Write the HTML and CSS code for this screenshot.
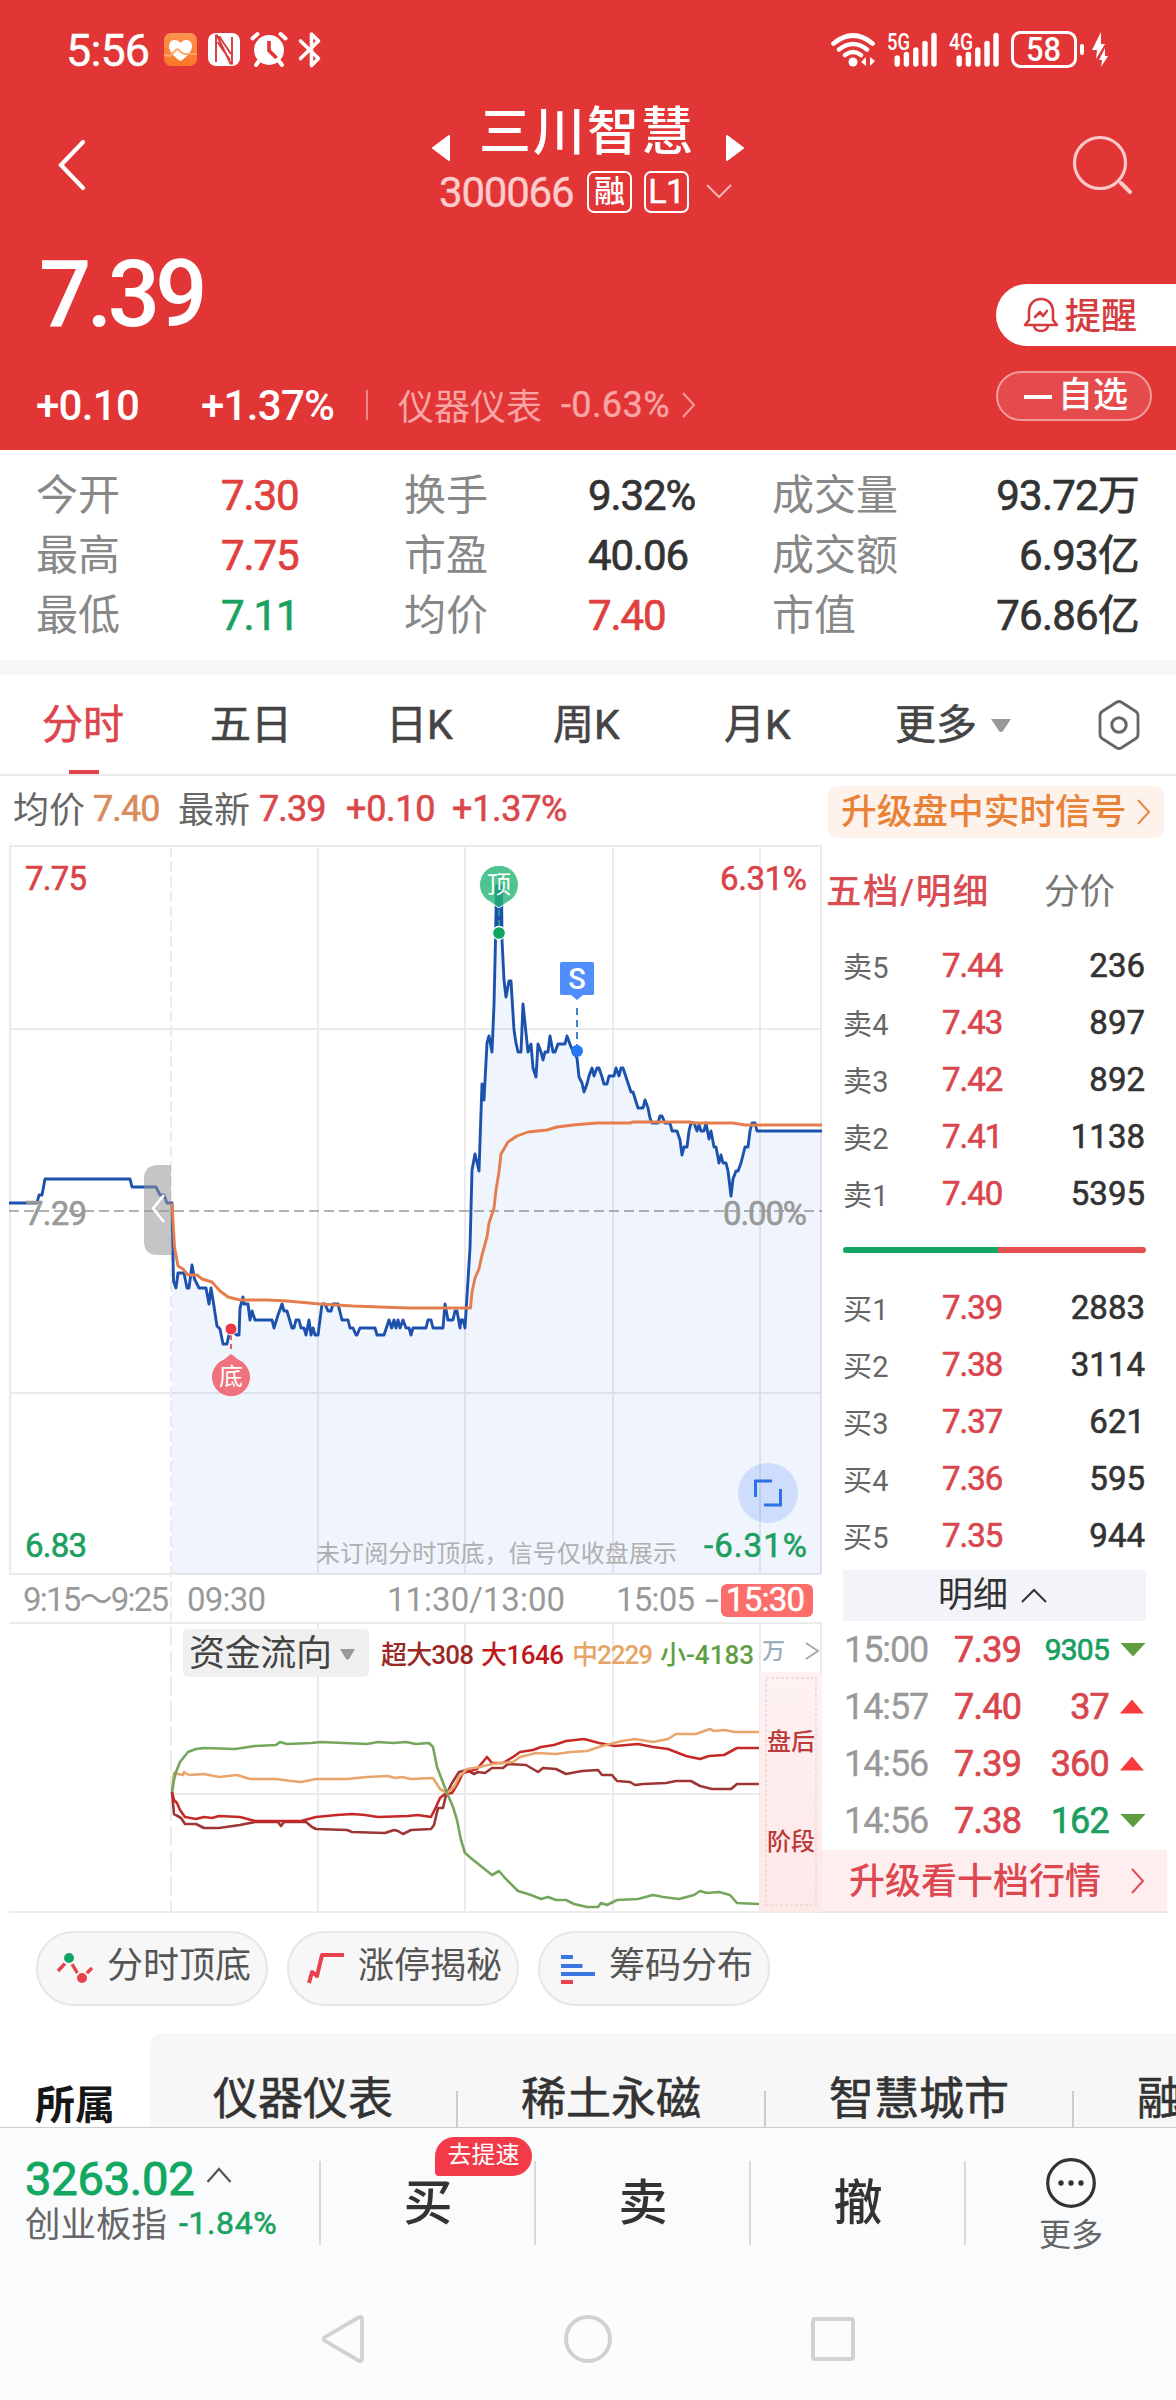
FILE: index.html
```html
<!DOCTYPE html>
<html lang="zh-CN">
<head>
<meta charset="utf-8">
<title>三川智慧 300066</title>
<link rel="stylesheet" href="styles.css">
</head>
<body>
<header class="top">
  <div class="status">
    <span class="clock">5:56</span>
    <svg class="st-left" width="160" height="38" viewBox="163 31 160 38">
      <defs><linearGradient id="hg" x1="0" y1="0" x2="0" y2="1"><stop offset="0" stop-color="#fc9350"/><stop offset="1" stop-color="#fb7526"/></linearGradient></defs>
      <rect x="164" y="33" width="33" height="33" rx="7" fill="url(#hg)"/>
      <path d="M180.500 61C174 57 169 51 169 46c0-7 8-8 11.500-3 3.500-5 11.500-4 11.500 3 0 5-5 11-11.500 15z" fill="#fff"/>
      <path d="M164 55l6 1 6-6c3-3 4 4 9 4h12" fill="none" stroke="#fba765" stroke-width="2"/>
      <rect x="208" y="33" width="32" height="33" rx="8" fill="#fff"/>
      <path d="M216 34.500V62M216.500 34.500L231 64.500M217.500 42L230 60M219 36l12 18M232 64.500V37" fill="none" stroke="#d8393a" stroke-width="1.900"/>
      <circle cx="269" cy="50" r="15" fill="#fff"/>
      <path d="M252.500 38.500l5-4.500M285.500 38.500l-5-4.500M259 61l-3 4M279 61l3 4" stroke="#fff" stroke-width="4" stroke-linecap="round"/>
      <path d="M269 41v9.500l7.500 7.500" fill="none" stroke="#e23536" stroke-width="3.600"/>
      <path d="M300.500 41L318.500 58.500 311.500 65.500V34L318.500 41 300.500 58.500" fill="none" stroke="#fff" stroke-width="3.600" stroke-linejoin="round" stroke-linecap="round"/>
    </svg>
    <svg class="st-right" width="280" height="40" viewBox="830 30 280 40">
      <g fill="none" stroke="#fff" stroke-width="4.600" stroke-linecap="round">
        <path d="M833.500 43.500Q853 27.500 872.500 43.500"/><path d="M839 49.500Q853 38.500 867 49.500"/><path d="M845 55Q853 49 861 55"/>
      </g>
      <circle cx="853" cy="62" r="4.500" fill="#fff"/>
      <path d="M866 57v9l-5-4zM870 57v9l5-5z" fill="#fff"/>
      <g fill="#fff" font-family="Roboto, sans-serif" font-weight="500" font-size="23">
        <text x="887" y="50" textLength="23" lengthAdjust="spacingAndGlyphs">5G</text>
        <text x="949" y="50" textLength="24" lengthAdjust="spacingAndGlyphs">4G</text>
      </g>
      <path d="M897.200 58v6M906.400 54.500v9.500M915.800 50v14M925 43.500v20.500M934 35.500v28.500M959.200 58v6M968.400 54.500v9.500M977.800 50v14M987 43.500v20.500M996 35.500v28.500" stroke="#fff" stroke-width="5.400" stroke-linecap="round"/>
      <rect x="1012.500" y="32.500" width="63" height="34" rx="8" fill="none" stroke="#fff" stroke-width="3"/>
      <rect x="1080" y="44" width="4" height="11" rx="2" fill="#fff"/>
      <text x="1026" y="61" font-family="Roboto, sans-serif" font-weight="500" font-size="34" fill="#fff" textLength="35" lengthAdjust="spacingAndGlyphs">58</text>
      <path d="M1101 32l-9 18h5l-1 9 9-15h-4zM1105 48l-6 12h3l-1 7 7-11h-3z" fill="#fff"/>
    </svg>
  </div>

  <div class="titlebar">
    <svg width="30" height="52" viewBox="0 0 30 52"><path d="M26 3L4 26 26 49" fill="none" stroke="#fff" stroke-width="4.200" stroke-linecap="round"/></svg>
    <div class="title">
      <div class="name-row">
        <svg width="20" height="28" viewBox="0 0 20 28"><path d="M18 2v24L2 14z" fill="#fff" stroke="#fff" stroke-width="2" stroke-linejoin="round"/></svg>
        <h1>三川智慧</h1>
        <svg width="20" height="28" viewBox="0 0 20 28"><path d="M2 2v24l16-12z" fill="#fff" stroke="#fff" stroke-width="2" stroke-linejoin="round"/></svg>
      </div>
      <div class="code-row">
        <span class="code">300066</span><span class="tag">融</span><span class="tag tag-l">L1</span>
        <svg width="26" height="16" viewBox="0 0 26 16"><path d="M1 1l12 12L25 1" fill="none" stroke="#f6b4b4" stroke-width="2"/></svg>
      </div>
    </div>
    <svg width="62" height="62" viewBox="0 0 62 62"><circle cx="29" cy="29" r="25.500" fill="none" stroke="#fbc9c9" stroke-width="3.200"/><path d="M50 49l9 9" stroke="#fbc9c9" stroke-width="4" stroke-linecap="round"/></svg>
  </div>

  <div class="quote">
    <div class="quote-main">
      <div class="price">7.39</div>
      <div class="change">
        <span class="chg">+0.10</span><span class="pct">+1.37%</span><i></i>
        <span class="sector">仪器仪表</span><span class="sector-pct">-0.63%</span>
        <svg width="14" height="26" viewBox="0 0 14 26"><path d="M1 1l11 12L1 25" fill="none" stroke="#f59a9a" stroke-width="2"/></svg>
      </div>
    </div>
    <div class="quote-actions">
      <div class="remind">
        <svg width="36" height="36" viewBox="0 0 36 36"><g fill="none" stroke="#d63c3e" stroke-width="2.600" stroke-linejoin="round" stroke-linecap="round"><path d="M2 28h32l-4-5V15C30 7 25 2 18 2S6 7 6 15v8z"/><path d="M11 29c1 4 4 5 7 5s6-1 7-5"/><path d="M12 20l5-5 3 4 4-5"/></g></svg>
        <span>提醒</span>
      </div>
      <div class="watch"><b></b><span>自选</span></div>
    </div>
  </div>
</header>

<section class="stats">
  <span>今开</span><em class="red">7.30</em><span>换手</span><em>9.32%</em><span>成交量</span><em class="r">93.72万</em>
  <span>最高</span><em class="red">7.75</em><span>市盈</span><em>40.06</em><span>成交额</span><em class="r">6.93亿</em>
  <span>最低</span><em class="green">7.11</em><span>均价</span><em class="red">7.40</em><span>市值</span><em class="r">76.86亿</em>
</section>

<nav class="tabs">
  <span class="tab on">分时</span><span class="tab">五日</span><span class="tab">日K</span><span class="tab">周K</span><span class="tab">月K</span>
  <span class="tab more">更多<svg width="20" height="14" viewBox="0 0 20 14"><path d="M0 0h20l-8 12q-2 2-4 0z" fill="#999"/></svg></span>
  <svg class="gear" width="44" height="52" viewBox="0 0 44 52"><path d="M19.500 3.200q2.500-1.400 5 0l14 9q2.500 1.500 2.500 4.500v18.600q0 3-2.500 4.500l-14 9q-2.500 1.400-5 0l-14-9Q3 38.300 3 35.300V16.700q0-3 2.500-4.500z" fill="none" stroke="#666" stroke-width="2.800"/><circle cx="22" cy="26" r="7.200" fill="none" stroke="#666" stroke-width="3"/></svg>
</nav>

<div class="info">
  <span class="k">均价</span><span class="v orange">7.40</span><span class="k k2">最新</span><span class="v">7.39</span><span class="v v2">+0.10</span><span class="v v3">+1.37%</span>
  <div class="upgrade"><span>升级盘中实时信号</span><svg width="14" height="26" viewBox="0 0 14 26"><path d="M1 1l11 12L1 25" fill="none" stroke="#e8883c" stroke-width="2"/></svg></div>
</div>

<main class="board">
  <svg class="chart" width="822" height="1068" viewBox="0 845 822 1068">
    <defs>
      <linearGradient id="after" x1="0" y1="0" x2="0" y2="1"><stop offset="0" stop-color="#fef2f2"/><stop offset="1" stop-color="#fde8e8"/></linearGradient>
    </defs>
    <g stroke="#ebebeb" stroke-width="2" fill="none">
      <path d="M9 846H822M9 1029H822M9 1393H822M9 1574H822M10 846V1574M318 846V1574M465 846V1574M613 846V1574M760 846V1574M821 846V1574"/>
      <path d="M171 846V1623" stroke-dasharray="11 4"/>
      <path d="M9 1623H822M9 1912H822M171 1794H760M318 1623V1912M465 1623V1912M613 1623V1912M760 1623V1912M821 1623V1672"/>
      <path d="M171 1626V1912" stroke-dasharray="20 5"/>
    </g>
    <path d="M9 1211H822" stroke="#999" stroke-width="1.500" stroke-dasharray="10 5"/>

    <path fill="#3874e0" fill-opacity=".08" d="M172 1203L174 1281 176 1288 178 1273 184 1273 187 1288 189 1288 192 1265 199 1288 206 1288 209 1304 211 1288 217 1326 223 1344 227 1344 237 1335 243 1297 248 1304 250 1320 272 1320 274 1328 282 1304 292 1328 299 1320 306 1335 309 1320 318 1335 322 1304 338 1304 342 1320 356 1335 375 1328 384 1335 389 1320 411 1335 426 1328 443 1328 445 1304 448 1320 465 1328 470 1260 472 1170 475 1154 479 1171 482 1084 484 1100 487 1043 489 1036 492 1052 494 1005 495.500 940 497 884 501 884 502 940 504 980 506 997 509 981 511 981 514 1030 518 1052 521 1052 523 1004 528 1052 531 1044 536 1077 538 1044 543 1060 550 1036 553 1052 558 1044 567 1036 577 1058 579 1077 584 1092 592 1068 599 1068 604 1084 609 1076 623 1068 631 1092 638 1108 643 1108 645 1100 652 1123 662 1116 670 1123 677 1131 682 1155 687 1147 691 1123 706 1123 714 1147 719 1163 726 1163 731 1196 736 1171 741 1163 745 1147 748 1147 752 1123 757 1131 822 1131V1574H172z"/>
    <polyline fill="none" stroke="#1c52ad" stroke-width="2.900" stroke-linejoin="round" points="9,1203 37,1203 39,1195 42,1195 45,1179 130,1179 132,1187 156,1187 160,1195 164,1195 167,1203 172,1203 173.500,1281 176,1288 178,1273 184,1273 187,1288 189,1288 192,1265 194.500,1279 199,1288 206,1288 209,1304 211,1288 213,1300 217,1326 220,1329 223,1344 227,1344 230,1330 237,1335 239,1335 240,1308 243,1297 244,1304 248,1304 250,1320 252,1311 255,1320 272,1320 274,1328 278,1315 282,1304 284,1311 287,1311 292,1328 294,1328 296,1320 299,1320 301,1328 304,1328 306,1335 309,1320 311,1335 313,1328 315,1335 318,1335 322,1304 325,1304 328,1311 331,1311 333,1304 338,1304 342,1320 348,1320 350,1328 353,1328 356,1335 357,1335 360,1328 375,1328 377,1335 384,1335 389,1320 391.700,1328 394,1320 396,1328 398,1320 400,1328 403,1320 406,1328 409,1328 411,1335 413,1328 426,1328 428,1320 431,1320 433,1328 443,1328 445,1304 448,1320 453,1320 455,1311 457,1311 460,1328 461,1320 463,1320 465,1328 470,1248 472,1170 475,1154 479,1171 482,1084 484,1100 487,1043 489,1036 492,1052 494,1005 495.500,940 496.500,886 498,886 499,935 500,886 501.500,886 502,940 504,980 506,997 509,981 511,981 514,1030 516,1043 518,1052 521,1052 523,1004 526,1033 528,1052 531,1044 533,1068 536,1077 538,1044 541,1052 543,1060 545,1052 548,1052 550,1036 553,1052 555,1052 558,1044 565,1044 567,1036 571,1047 577,1058 579,1077 582,1083 584,1092 587,1084 589,1076 592,1068 594,1076 597,1068 599,1068 602,1077 604,1084 607,1084 609,1076 614,1076 616,1068 619,1076 621,1068 623,1068 626,1077 631,1092 633,1092 638,1108 643,1108 645,1100 648,1108 650,1118 652,1123 658,1123 660,1116 662,1116 665,1123 670,1123 672,1131 677,1131 680,1140 682,1155 684,1147 687,1147 689,1131 691,1123 694,1123 697,1131 699,1125 701,1131 704,1131 706,1123 709,1139 711,1131 714,1147 716,1147 719,1163 721,1155 723,1163 726,1163 728,1171 731,1196 733,1179 736,1171 738,1171 741,1163 745,1147 748,1147 750,1131 752,1123 755,1123 757,1131 822,1131"/>
    <path d="M495 886h8v44h-8z" fill="#1c52ad"/>
    <polyline fill="none" stroke="#e57d4c" stroke-width="2.900" stroke-linejoin="round" points="172,1203 174.500,1247 178,1266 183,1269 188,1275 197,1275 202,1279 212,1282 220,1291 228,1297 240,1300 267,1300 287,1301 320,1304 353,1306 380,1307 410,1308 470.500,1308 472,1292 475,1278 479,1269 482,1255 487,1237 489,1223 494,1208 496,1190 499,1172 501,1154 508,1142 517,1136 528,1132 547,1130 557,1127 573,1125 597,1123 630,1123 633,1122 690,1122 693,1123 733,1123 745,1125 822,1125"/>

    <path d="M171 1165h-13q-14 0-14 14v62q0 14 14 14h13z" fill="#969696" fill-opacity=".55"/>
    <path d="M164 1195l-11 13.500 11 13.500" fill="none" stroke="#fff" stroke-width="2.600"/>

    <g class="axis">
      <text x="25" y="890" fill="#d94449" textLength="62">7.75</text>
      <text x="25" y="1225" fill="#999" textLength="62">7.29</text>
      <text x="25" y="1557" fill="#1d9f60" textLength="62">6.83</text>
      <text x="720" y="890" fill="#d94449" textLength="87">6.31%</text>
      <text x="723" y="1225" fill="#999" textLength="84">0.00%</text>
      <text x="704" y="1557" fill="#1d9f60" textLength="103">-6.31%</text>
    </g>
    <text class="note" x="316" y="1562" textLength="361">未订阅分时顶底，信号仅收盘展示</text>

    <circle cx="768" cy="1493" r="30" fill="#5c8ffa" fill-opacity=".22"/>
    <path d="M772 1481H755.500V1497M764 1505H780.500V1489" fill="none" stroke="#2d71e6" stroke-width="3"/>

    <path d="M231 1335v16" stroke="#e0606b" stroke-width="2" stroke-dasharray="5 4"/>
    <circle cx="231" cy="1329" r="6" fill="#ee3843" stroke="#fff" stroke-width="1"/>
    <path d="M231 1354l7 5.500a19 19 0 1 1-14 0z" fill="#ef727c"/>
    <text class="mark" x="231" y="1385" text-anchor="middle">底</text>
    <path d="M499 908l-8-5.500a19.500 19.500 0 1 1 16 0z" fill="#23b474" fill-opacity=".8" stroke="#fff" stroke-width="1"/>
    <path d="M499 910v18" stroke="#1f9a82" stroke-width="2" stroke-dasharray="6 4"/>
    <circle cx="499" cy="933" r="6.500" fill="#0da55f" stroke="#fff" stroke-width="1.300"/>
    <text class="mark" x="499" y="893" text-anchor="middle">顶</text>
    <path d="M561.500 962h31q1.500 0 1.500 1.500v30q0 1.500-1.500 1.500H583l-6 5-6-5h-9.500q-1.500 0-1.500-1.500v-30q0-1.500 1.500-1.500z" fill="#508ffb"/>
    <text x="577" y="989" text-anchor="middle" font-family="Roboto, sans-serif" font-weight="500" font-size="29" fill="#fff">S</text>
    <path d="M577 1008v37" stroke="#4081d8" stroke-width="2" stroke-dasharray="7 5"/>
    <circle cx="577" cy="1051" r="6" fill="#2478f5"/>

    <g class="time">
      <text x="23" y="1611" textLength="146">9:15～9:25</text>
      <text x="187" y="1611" textLength="79">09:30</text>
      <text x="387" y="1611" textLength="178">11:30/13:00</text>
      <text x="616" y="1611" textLength="79">15:05</text>
      <text x="705" y="1611" textLength="14" lengthAdjust="spacingAndGlyphs">-</text>
      <rect x="721" y="1584" width="92" height="33" rx="6" fill="#fc6e6c"/>
      <text class="now" x="726" y="1611" textLength="79">15:30</text>
    </g>

    <rect x="183" y="1629" width="186" height="48" rx="5" fill="#f0f0f0"/>
    <text class="sel" x="189" y="1666" textLength="143">资金流向</text>
    <path d="M340 1649h15l-6 10q-1.500 1.500-3 0z" fill="#999"/>
    <g class="flow">
      <text x="381" y="1664" fill="#9c2824" textLength="93">超大308</text>
      <text x="481" y="1664" fill="#c0191b" textLength="83">大1646</text>
      <text x="572" y="1664" fill="#e5a566" textLength="81">中2229</text>
      <text x="660" y="1664" fill="#5f9e45" textLength="94">小-4183</text>
      <text x="762" y="1659" fill="#9badbd" font-size="23">万</text>
    </g>
    <path d="M806 1643l12 8-12 8" fill="none" stroke="#aaa" stroke-width="2"/>
    <g fill="none" stroke-width="2.600" stroke-linejoin="round">
      <polyline stroke="#9c3533" points="172,1792 174,1814 181,1818 185,1824 196,1824 204,1828 219,1828 240,1825 255,1822 278,1822 281,1826 284,1822 306,1822 312,1827 316,1829 347,1830 352,1832 385,1833 394,1830 398,1831 403,1834 411,1830 431,1829 434,1825 438,1808 443,1808 446,1795 452,1783 459,1772 467,1770 474,1774 478,1772 485,1773 492,1768 503,1768 508,1764 526,1765 538,1772 543,1768 556,1769 566,1774 582,1771 598,1770 602,1775 612,1775 617,1781 630,1782 635,1785 643,1784 666,1783 676,1781 691,1781 700,1786 712,1789 731,1789 737,1784 759,1784"/>
      <polyline stroke="#c62828" points="172,1792 174,1800 177,1803 180,1810 185,1817 196,1819 204,1817 212,1818 219,1816 240,1817 255,1821 301,1821 316,1817 337,1815 352,1814 365,1815 378,1817 408,1816 418,1815 431,1817 436,1807 440,1798 445,1794 452,1793 458,1783 463,1773 477,1769 487,1757 492,1763 503,1763 513,1757 520,1752 533,1750 541,1747 554,1745 566,1741 584,1739 599,1743 615,1746 638,1744 653,1747 668,1749 686,1756 700,1759 709,1756 724,1755 737,1748 759,1748"/>
      <polyline stroke="#e8a56c" points="172,1792 174,1773 183,1775 184,1772 189,1775 204,1774 219,1777 237,1775 250,1779 276,1779 291,1781 301,1782 316,1779 347,1779 367,1777 388,1776 395,1778 402,1777 411,1779 433,1778 440,1789 447,1793 454,1787 459,1777 467,1769 480,1767 492,1764 513,1762 520,1757 536,1753 556,1754 571,1752 587,1751 602,1746 622,1741 635,1739 653,1742 668,1739 676,1734 696,1734 710,1729 714,1731 724,1730 735,1732 759,1732"/>
      <polyline stroke="#74a65d" points="172,1792 174,1780 176,1772 180,1762 188,1752 196,1749 204,1748 235,1749 255,1746 276,1745 280,1742 287,1744 311,1743 321,1742 367,1744 378,1742 393,1743 406,1742 416,1744 429,1743 433,1747 437,1767 442,1780 447,1793 453,1807 457,1820 461,1840 465,1853 472,1859 482,1867 492,1875 499,1871 505,1878 518,1891 531,1895 541,1899 548,1897 556,1900 566,1900 574,1904 587,1907 598,1907 601,1903 607,1905 617,1900 638,1899 653,1895 663,1897 679,1899 694,1895 700,1891 707,1893 719,1892 730,1895 737,1903 759,1904"/>
    </g>
    <rect x="760" y="1672" width="62" height="240" fill="url(#after)"/>
    <rect x="766" y="1678" width="50" height="227" fill="none" stroke="#f4d2d2" stroke-width="1.500" stroke-dasharray="3 2"/>
    <text class="after" x="791" y="1750" text-anchor="middle">盘后</text>
    <text class="after" x="791" y="1850" text-anchor="middle">阶段</text>
  </svg>

  <aside class="book">
    <div class="book-tabs"><span class="on">五档/明细</span><span>分价</span></div>
    <div class="lv"><span>卖5</span><b>7.44</b><em>236</em></div>
    <div class="lv"><span>卖4</span><b>7.43</b><em>897</em></div>
    <div class="lv"><span>卖3</span><b>7.42</b><em>892</em></div>
    <div class="lv"><span>卖2</span><b>7.41</b><em>1138</em></div>
    <div class="lv"><span>卖1</span><b>7.40</b><em>5395</em></div>
    <div class="ratio"><i class="buy"></i><i class="sell"></i></div>
    <div class="lv"><span>买1</span><b>7.39</b><em>2883</em></div>
    <div class="lv"><span>买2</span><b>7.38</b><em>3114</em></div>
    <div class="lv"><span>买3</span><b>7.37</b><em>621</em></div>
    <div class="lv"><span>买4</span><b>7.36</b><em>595</em></div>
    <div class="lv"><span>买5</span><b>7.35</b><em>944</em></div>
    <div class="detail">明细<svg width="26" height="15" viewBox="0 0 26 15"><path d="M1 14L13 2l12 12" fill="none" stroke="#333" stroke-width="2"/></svg></div>
    <div class="tick"><span>15:00</span><b>7.39</b><em class="green small">9305</em><i class="down"></i></div>
    <div class="tick"><span>14:57</span><b>7.40</b><em>37</em><i class="up"></i></div>
    <div class="tick"><span>14:56</span><b>7.39</b><em>360</em><i class="up"></i></div>
    <div class="tick"><span>14:56</span><b>7.38</b><em class="green">162</em><i class="down"></i></div>
    <div class="ten"><span>升级看十档行情</span><svg width="14" height="26" viewBox="0 0 14 26"><path d="M1 1l11 12L1 25" fill="none" stroke="#dc4d54" stroke-width="2"/></svg></div>
  </aside>
</main>

<div class="chips">
  <div class="chip"><svg width="40" height="36" viewBox="0 0 40 36"><path d="M3 20L14 8 26 28 37 17" fill="none" stroke="#e8434d" stroke-width="3.400"/><circle cx="14" cy="7" r="6" fill="#12a564" stroke="#f7f7f7" stroke-width="2"/><circle cx="27" cy="27" r="6" fill="#e8434d" stroke="#f7f7f7" stroke-width="2"/></svg>分时顶底</div>
  <div class="chip"><svg width="40" height="36" viewBox="0 0 40 36"><path d="M3 32L6 21 11 25 16 4H38" fill="none" stroke="#e8434d" stroke-width="4" stroke-linejoin="round"/></svg>涨停揭秘</div>
  <div class="chip"><svg width="40" height="36" viewBox="0 0 40 36"><path d="M4 6H16M4 15H25.500M4 23H38" stroke="#3b76e3" stroke-width="4"/><path d="M4 31H16" stroke="#e8434d" stroke-width="4"/></svg>筹码分布</div>
</div>

<div class="concepts">
  <strong>所属</strong>
  <div class="list"><span>仪器仪表</span><i></i><span>稀土永磁</span><i></i><span>智慧城市</span><i></i><span class="last">融</span></div>
</div>

<footer class="actions">
  <div class="index">
    <div class="idx-row"><span class="idx">3263.02</span><svg width="26" height="16" viewBox="0 0 26 16"><path d="M1.500 15L13 2l11.500 13" fill="none" stroke="#555" stroke-width="2.200"/></svg></div>
    <div class="idx-sub"><span>创业板指</span><em>-1.84%</em></div>
  </div>
  <div class="act">买<span class="badge">去提速</span></div>
  <div class="act">卖</div>
  <div class="act">撤</div>
  <div class="act etc">
    <svg width="52" height="52" viewBox="0 0 52 52"><circle cx="26" cy="26" r="23.300" fill="none" stroke="#333" stroke-width="3.200"/><circle cx="16" cy="26" r="2.700" fill="#333"/><circle cx="26" cy="26" r="2.700" fill="#333"/><circle cx="36" cy="26" r="2.700" fill="#333"/></svg>
    <span>更多</span>
  </div>
</footer>

<div class="sysnav">
  <svg width="44" height="50" viewBox="0 0 44 50"><path d="M37.500 3.500Q41 1.500 41 5v40q0 3.500-3.500 1.500L4 27q-3-2 0-4z" fill="none" stroke="#d2d2d2" stroke-width="3.800"/></svg>
  <svg width="50" height="50" viewBox="0 0 50 50"><circle cx="25" cy="25" r="22" fill="none" stroke="#d2d2d2" stroke-width="4"/></svg>
  <svg width="44" height="44" viewBox="0 0 44 44"><rect x="2" y="2" width="40" height="40" rx="2" fill="none" stroke="#d2d2d2" stroke-width="4"/></svg>
</div>
</body>
</html>
```
FILE: styles.css
```css
* { box-sizing: border-box; }
body {
  margin: 0;
  width: 1176px;
  height: 2400px;
  overflow: hidden;
  background: #fff;
  color: #333;
  font-family: Roboto, "Noto Sans CJK SC", sans-serif;
}
svg { display: block; flex: none; }
em, i { font-style: normal; }
span, em, b, strong { white-space: nowrap; }
.red { color: #e03f3c; }
.green { color: #1aa261; }

/* header */
.top { height: 450px; background: #e23536; color: #fff; }
.status { height: 98px; display: flex; align-items: center; padding: 2px 66px 0 66px; }
.clock { width: 97px; font-size: 45px; letter-spacing: -0.9px; -webkit-text-stroke: .4px #fff; }
.st-right { margin-left: auto; }
.titlebar { height: 124px; display: flex; justify-content: space-between; padding: 0 43px 0 57px; align-items: center; }
.titlebar > svg:first-child { margin: 10px 0 0; }
.titlebar > svg:last-child { margin: 10px 0 0; }
.title { width: 314px; margin-left: 18px; height: 124px; }
.name-row { display: flex; justify-content: space-between; align-items: center; height: 68px; }
.name-row svg { margin-top: 32px; }
.name-row h1 { margin: 2px 0 0 -2px; font-size: 52px; font-weight: 500; letter-spacing: 2px; line-height: 68px; }
.code-row { display: flex; align-items: center; height: 52px; padding-left: 8px; }
.code { width: 148px; font-size: 42px; letter-spacing: -1.2px; color: #fccbcb; -webkit-text-stroke: .4px #fccbcb; }
.tag { width: 45px; height: 42px; border: 2px solid #fff; border-radius: 7px; font-size: 31px; line-height: 37px; text-align: center; margin-right: 12px; font-weight: 500; }
.tag-l { font-size: 34px; margin-right: 17px; font-weight: 400; letter-spacing: -0.5px; -webkit-text-stroke: .5px #fff; }
.quote { display: flex; justify-content: space-between; height: 228px; }
.price { margin: 25px 0 0 39px; font-size: 92px; line-height: 96px; font-weight: 500; letter-spacing: -4.6px; }
.change { display: flex; align-items: center; height: 46px; margin: 39px 0 0 36px; }
.chg, .pct { font-size: 42px; font-weight: 500; letter-spacing: -0.7px; }
.chg { width: 165px; }
.pct { width: 165px; letter-spacing: -0.7px; }
.change i { width: 2px; height: 30px; background: #f08787; margin-right: 30px; }
.sector { font-size: 36px; width: 163px; color: #f8a5a5; margin-top: -3px; }
.sector-pct { font-size: 36px; width: 121px; color: #f8a5a5; letter-spacing: 0.4px; -webkit-text-stroke: .4px #f8a5a5; }
.quote-actions { width: 180px; padding-top: 62px; }
.remind { height: 62px; background: #fff; border-radius: 31px 0 0 31px; display: flex; align-items: center; gap: 6px; padding-left: 27px; color: #d63c3e; font-size: 36px; font-weight: 500; }
.remind span { margin-top: -4px; }
.watch { width: 156px; height: 50px; margin-top: 25px; border: 2px solid #f29b9b; border-radius: 25px; background: #e54b4c; display: flex; align-items: center; padding-left: 26px; gap: 6px; font-size: 35px; font-weight: 500; line-height: 46px; }
.watch b { width: 28px; height: 4px; background: #fff; margin-top: 1px; }
.watch span { margin-top: -1px; }

/* key figures */
.stats { height: 225px; padding: 16px 37px 0 36px; display: grid; grid-template-columns: 185px 183px 184px 184px 159px 208px; grid-template-rows: repeat(3, 60px); align-items: center; font-size: 42px; line-height: 60px; border-bottom: 15px solid #f7f7f7; }
.stats span { color: #888; }
.stats em { letter-spacing: -1.1px; font-size: 42px; -webkit-text-stroke: .7px currentColor; }
.stats .r { text-align: right; letter-spacing: -0.8px; }

/* period tabs */
.tabs { height: 101px; display: flex; align-items: center; border-bottom: 2px solid #ebebeb; padding-left: 42px; font-size: 41px; color: #444; }
.tab { width: 171px; line-height: 100px; height: 99px; -webkit-text-stroke: .6px currentColor; }
.tab:nth-child(1) { width: 168px; }
.tab:nth-child(2) { width: 176px; }
.tab:nth-child(3) { width: 167px; }
.tab.on { color: #dd444c; background: linear-gradient(#e0434b, #e0434b) 27px 95px / 30px 4px no-repeat; }
.tab.more { width: 203px; display: flex; align-items: center; gap: 14px; }
.tab.more svg { margin-top: 2px; }
.gear { margin-left: -1px; }

.info { height: 69px; display: flex; align-items: center; padding: 0 12px 0 13px; font-size: 36px; }
.info .k { color: #666; width: 80px; margin-top: -8px; }
.info .k2 { width: 81px; }
.info .v { color: #d9484b; width: 87px; letter-spacing: -0.9px; margin-top: -4px; -webkit-text-stroke: .6px currentColor; }
.info .v.orange { color: #d88b5b; width: 85px; }
.info .v2 { width: 106px; letter-spacing: -0.3px; }
.info .v3 { width: 116px; letter-spacing: -0.3px; }
.upgrade { margin: 2px 0 0 auto; width: 336px; height: 52px; border-radius: 8px; background: #fef3ec; color: #e88237; font-weight: 500; display: flex; align-items: center; padding-left: 13px; gap: 10px; font-size: 35.7px; line-height: 50px; }

/* chart and order book */
.board { display: flex; height: 1068px; }
.axis { font: 33px Roboto, sans-serif; }
.axis text { stroke-width: .6px; }
.axis text[fill="#d94449"] { stroke: #d94449; }
.axis text[fill="#999"] { stroke: #999; }
.axis text[fill="#1d9f60"] { stroke: #1d9f60; }
.note { font: 24px "Noto Sans CJK SC", sans-serif; fill: #b0b0b0; }
.mark { font: 24px "Noto Sans CJK SC", sans-serif; fill: #fff; }
.time { font: 33px Roboto, "Noto Sans CJK SC", sans-serif; fill: #999; }
.time .now { fill: #fff; stroke: #fff; stroke-width: .5px; }
.sel { font: 36px "Noto Sans CJK SC", sans-serif; fill: #444; }
.flow { font: 500 26px Roboto, "Noto Sans CJK SC", sans-serif; }
.after { font: 500 24px "Noto Sans CJK SC", sans-serif; fill: #bd3a3a; }

.book { width: 345px; padding-left: 21px; }
.book-tabs { height: 92px; margin-left: -17px; padding: 0 52px 6px 0; display: flex; align-items: center; justify-content: space-between; font-size: 35.5px; color: #777; }
.book-tabs .on { color: #d94c52; font-weight: 500; letter-spacing: 1.6px; }
.lv { height: 57px; width: 303px; display: flex; align-items: center; }
.lv span { width: 99px; font-size: 29px; color: #666; letter-spacing: .2px; margin-top: -2px; }
.lv b { font-size: 33px; font-weight: 400; color: #d9464d; letter-spacing: -1px; -webkit-text-stroke: .6px #d9464d; }
.lv em { margin: 0 1px 0 auto; font-size: 33px; -webkit-text-stroke: .6px #333; }
.ratio { display: flex; height: 57px; width: 303px; align-items: center; }
.ratio i { height: 6px; border-radius: 3px 0 0 3px; margin-top: -1px; }
.ratio .buy { background: #14a564; width: 155px; }
.ratio .sell { background: #e45050; flex: 1; border-radius: 0 3px 3px 0; }
.detail { width: 303px; height: 51px; margin-top: 6px; background: #f3f4f9; display: flex; align-items: center; justify-content: center; gap: 13px; font-size: 35px; padding-right: 4px; line-height: 50px; }
.tick { height: 57px; width: 303px; display: flex; align-items: center; padding-left: 1px; }
.tick span { width: 110px; font-size: 36px; color: #999; letter-spacing: -1.1px; -webkit-text-stroke: .3px #999; }
.tick b { width: 67px; font-size: 36px; font-weight: 400; color: #d9464d; letter-spacing: -0.7px; -webkit-text-stroke: .7px #d9464d; }
.tick em { flex: 1; text-align: right; font-size: 36px; color: #d9464d; letter-spacing: -0.8px; -webkit-text-stroke: .7px currentColor; }
.tick em.green { color: #1a9f60; }
.tick .small { font-size: 30px; }
.tick i { width: 26px; height: 14px; margin-left: 11px; }
.tick .down { background: #5e9e3e; clip-path: polygon(0 0, 100% 0, 50% 100%); }
.tick .up { background: #f93a3a; clip-path: polygon(0 100%, 92% 100%, 46% 0); }
.ten { height: 63px; margin: 1px 0 0 -21px; border-bottom: 2px solid #ebe4e4; background: #feeeef; display: flex; align-items: center; justify-content: space-between; padding: 0 22px 0 27px; font-size: 36px; color: #dc4850; font-weight: 500; }
.ten span { margin-top: -5px; }

/* shortcuts */
.chips { height: 120px; padding: 18px 0 0 36px; display: flex; gap: 19px; }
.chip { width: 232px; height: 75px; border: 2px solid #e6e6e6; border-radius: 38px; background: #f7f7f7; display: flex; align-items: center; padding: 0 0 14px 17px; gap: 12px; font-size: 36px; color: #555; }
.chip svg { margin-top: 14px; }

.concepts { height: 95px; display: flex; border-bottom: 1.5px solid #ccc; overflow: hidden; }
.concepts strong { flex: none; width: 150px; padding: 43px 0 0 35px; font-size: 40px; line-height: 60px; color: #161616; }
.list { flex: 1; min-width: 0; background: #f7f7f7; border-radius: 12px 0 0 0; display: flex; font-size: 45px; padding-left: 63px; line-height: 60px; overflow: hidden; }
.list span { flex: none; width: 180px; padding-top: 37px; margin-right: 63px; -webkit-text-stroke: .6px #333; }
.list i { flex: none; width: 2px; margin: 58px 63px 0 0; background: #ccc; }
.list .last { width: 45px; margin-right: 0; }

/* trade bar */
.actions { height: 150px; background: #fafbfd; display: flex; padding-top: 33px; overflow: hidden; }
.index { flex: none; width: 319px; padding-left: 25px; }
.idx-row { height: 38px; display: flex; align-items: center; gap: 12px; margin-top: -2px; }
.idx { font-size: 47px; color: #12a861; letter-spacing: -0.2px; -webkit-text-stroke: 1px #12a861; }
.idx-row svg { margin-top: -6px; }
.idx-sub { display: flex; align-items: center; font-size: 35.5px; color: #666; height: 46px; margin-top: 3px; }
.idx-sub span { width: 154px; margin-top: -4px; }
.idx-sub em { font-size: 32px; color: #1aa261; letter-spacing: .6px; -webkit-text-stroke: .6px #1aa261; }
.act { position: relative; flex: none; width: 215px; height: 84px; border-left: 2px solid #d9d9dc; font-size: 49px; font-weight: 500; text-align: center; line-height: 86px; padding-left: 1px; }
.badge { position: absolute; left: 114px; top: -24px; width: 97px; height: 39px; background: #f33a48; border-radius: 20px 20px 20px 4px; color: #fff; font-size: 24px; line-height: 37px; font-weight: 400; }
.etc { width: 211px; display: flex; flex-direction: column; align-items: center; }
.etc svg { margin-top: -4px; }
.etc span { font-size: 32px; line-height: 40px; color: #666; margin-top: 6px; font-weight: 400; }

.sysnav { height: 122px; background: #fcfcfc; display: flex; align-items: center; justify-content: center; gap: 198px; }
```
